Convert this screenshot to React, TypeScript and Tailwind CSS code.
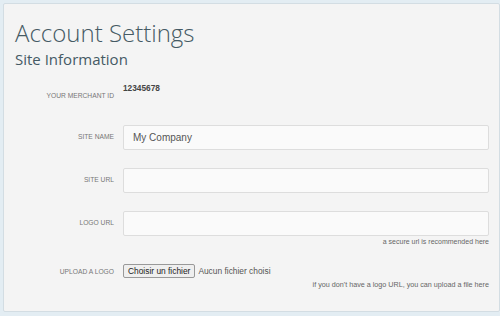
import React from "react";

const labelCls =
  "w-[108px] shrink-0 pr-[9px] text-right text-[6.7px] uppercase text-[#777]";

export default function App() {
  return (
    <div className="w-[500px] h-[316px] bg-[#e3edf3] pt-[3px] pl-[3px] overflow-hidden" style={{ fontFamily: "'Liberation Sans', Arial, sans-serif" }}>
      <div className="h-[309px] bg-[#f4f4f4] border border-[#d3dde3] rounded-[2px] pl-[11px] pr-[10px] pt-[13px]">
        <h1 className="text-[24px] leading-[32px] font-light text-[#455a64]" style={{ fontFamily: "'Open Sans', sans-serif" }}>
          Account Settings
        </h1>
        <h2 className="text-[15px] leading-[20px] font-normal text-[#455a64]" style={{ fontFamily: "'Open Sans', sans-serif" }}>
          Site Information
        </h2>

        <div className="flex mt-[12px] h-[32px]">
          <div className={labelCls + " pt-[10px]"}>Your Merchant ID</div>
          <div className="text-[8.3px] font-bold text-[#444] pt-[1px]">12345678</div>
        </div>

        <div className="flex items-center mt-[12px]">
          <div className={labelCls}>Site Name</div>
          <div className="flex-1 h-[25px] bg-[#fafafa] border border-[#ddd] rounded-[2px] flex items-center px-[9px] text-[10px] text-[#555]">
            My Company
          </div>
        </div>

        <div className="flex items-center mt-[18px]">
          <div className={labelCls}>Site URL</div>
          <div className="flex-1 h-[25px] bg-[#fafafa] border border-[#ddd] rounded-[2px]" />
        </div>

        <div className="flex items-center mt-[18px]">
          <div className={labelCls}>Logo URL</div>
          <div className="flex-1 h-[25px] bg-[#fafafa] border border-[#ddd] rounded-[2px]" />
        </div>
        <div className="text-right text-[7px] text-[#666] mt-[1px] leading-[10px]">a secure url is recommended here</div>

        <div className="flex items-center mt-[17px]">
          <div className={labelCls + " pt-[3px]"}>Upload a Logo</div>
          <div className="flex items-center text-[8.4px]">
            <div className="h-[14px] px-[4px] flex items-center border border-[#999] bg-[#efefef] rounded-[2px] text-[#222]">Choisir un fichier</div>
            <span className="ml-[3px] text-[#555]">Aucun fichier choisi</span>
          </div>
        </div>
        <div className="text-right text-[7.2px] text-[#666] mt-[2px] leading-[10px]">if you don't have a logo URL, you can upload a file here</div>
      </div>
    </div>
  );
}
